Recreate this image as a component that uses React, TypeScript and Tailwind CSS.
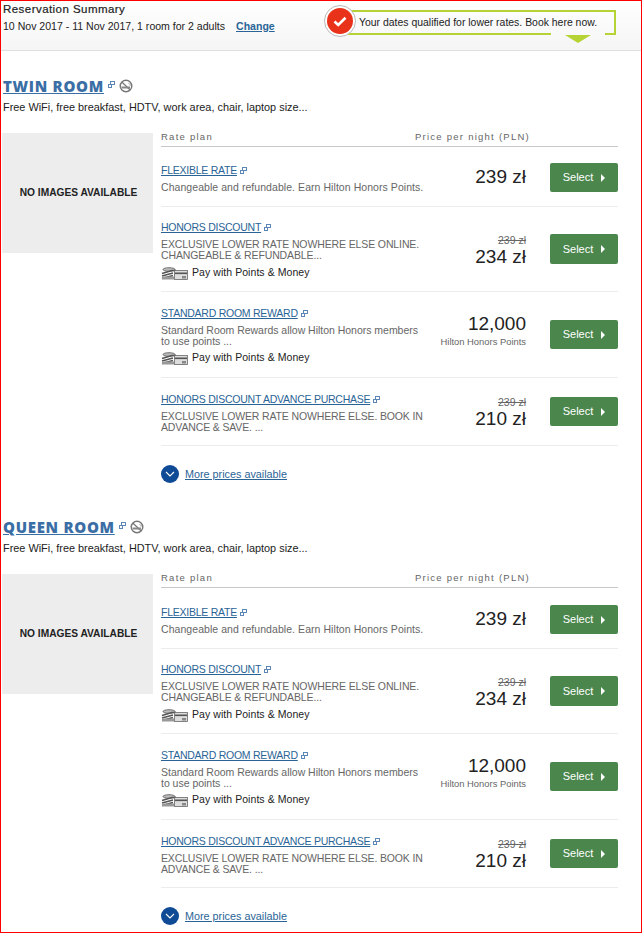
const FONT = "font-['Liberation_Sans',Arial,sans-serif]";

type Rate = {
  name: string;
  desc: string[];
  pay?: boolean;
  was?: string;
  price: string;
  unit?: string;
  height: string;
  titleTop: string;
  priceTop: string;
  btn: string;
  track: string;
  payGap?: string;
};

const RATES: Rate[] = [
  { name: "FLEXIBLE RATE", desc: ["Changeable and refundable. Earn Hilton Honors Points."], price: "239 zł", height: "h-[61px]", titleTop: "pt-[17px]", priceTop: "pt-[19px]", btn: "mt-[17px] h-[29px]", track: "tracking-[0.06px]" },
  { name: "HONORS DISCOUNT", desc: ["EXCLUSIVE LOWER RATE NOWHERE ELSE ONLINE.", "CHANGEABLE & REFUNDABLE..."], pay: true, was: "239 zł", price: "234 zł", height: "h-[85px]", titleTop: "pt-[13px]", priceTop: "pt-[28px]", btn: "mt-[27px] h-[30px]", track: "tracking-[-0.12px]", payGap: "mt-[5px]" },
  { name: "STANDARD ROOM REWARD", desc: ["Standard Room Rewards allow Hilton Honors members", "to use points ..."], pay: true, price: "12,000", unit: "Hilton Honors Points", height: "h-[86px]", titleTop: "pt-[14px]", priceTop: "pt-[20px]", btn: "mt-[28px] h-[29px]", track: "tracking-[-0.02px]", payGap: "mt-[4px]" },
  { name: "HONORS DISCOUNT ADVANCE PURCHASE", desc: ["EXCLUSIVE LOWER RATE NOWHERE ELSE. BOOK IN", "ADVANCE & SAVE. ..."], was: "239 zł", price: "210 zł", height: "h-[68px]", titleTop: "pt-[14px]", priceTop: "pt-[19px]", btn: "mt-[19px] h-[29px]", track: "tracking-[-0.14px]" },
];

function PopupIcon() {
  return (
    <svg width="7" height="7" viewBox="0 0 7 7" className="shrink-0" fill="none" stroke="#5b86b5" strokeWidth="1">
      <rect x="2.5" y="0.5" width="4" height="3" />
      <rect x="0.5" y="3.5" width="3" height="3" fill="#fff" />
    </svg>
  );
}

function NoSmoking() {
  return (
    <svg width="14" height="14" viewBox="0 0 14 14" className="shrink-0" fill="none">
      <circle cx="7" cy="7" r="5.8" stroke="#777" strokeWidth="1.4" />
      <path d="M2.8 3 11.2 11" stroke="#777" strokeWidth="1.2" />
      <rect x="2.5" y="7.5" width="8.5" height="2" fill="#888" />
      <path d="M9.5 4.5c1.5.2 1.8 1.2 1.6 2.3" stroke="#999" strokeWidth="0.9" />
    </svg>
  );
}

function PayIcon() {
  return (
    <svg width="27" height="13" viewBox="0 0 27 13" className="shrink-0" fill="none">
      <ellipse cx="8" cy="2.5" rx="6" ry="1.8" fill="#bbb" stroke="#555" strokeWidth="0.8" />
      <path d="M1 6.5 11 3.5h4M1 9 12 6M1 11.5 12 8.5" stroke="#555" strokeWidth="1.4" />
      <rect x="1" y="9.5" width="12" height="3" fill="#999" />
      <rect x="13.5" y="3.5" width="13" height="9" fill="#ddd" stroke="#666" strokeWidth="0.8" />
      <rect x="14" y="5.5" width="12" height="1.6" fill="#555" />
      <rect x="21" y="9" width="4" height="2.5" fill="#888" />
    </svg>
  );
}

function RateRow({ rate }: { rate: Rate }) {
  return (
    <div className={`flex border-b border-[#ececec] ${rate.height}`}>
      <div className={`w-[264px] shrink-0 ${rate.titleTop}`}>
        <div className="flex items-center gap-[3px] h-[14px]">
          <a className="text-[10.5px] leading-[14px] tracking-[-0.25px] text-[#2a6496] underline whitespace-nowrap">{rate.name}</a>
          <PopupIcon />
        </div>
        <div className={`mt-[5px] text-[10.5px] leading-[11px] text-[#666] whitespace-nowrap ${rate.track}`}>
          {rate.desc.map((d) => (
            <div key={d}>{d}</div>
          ))}
        </div>
        {rate.pay && (
          <div className={`flex items-center gap-[4px] h-[14px] ${rate.payGap}`}>
            <PayIcon />
            <span className="text-[10.5px] tracking-[0.06px] text-[#222] whitespace-nowrap">Pay with Points &amp; Money</span>
          </div>
        )}
      </div>
      <div className={`w-[101px] shrink-0 flex flex-col items-end text-right ${rate.priceTop}`}>
        {rate.was && <div className="text-[10.5px] leading-[11px] text-[#666] line-through">{rate.was}</div>}
        <div className={`text-[19px] leading-[24px] text-[#222] ${rate.was ? "-mt-[1px]" : ""}`}>{rate.price}</div>
        {rate.unit && <div className="text-[9.4px] leading-[12px] text-[#666] whitespace-nowrap">{rate.unit}</div>}
      </div>
      <div className="ml-auto">
        <button className={`w-[68px] bg-[#4b874d] rounded-[2px] flex items-center justify-center gap-[8px] text-[11px] text-white ${rate.btn}`}>
          Select
          <span className="w-0 h-0 border-y-[4px] border-y-transparent border-l-[4px] border-l-white" />
        </button>
      </div>
    </div>
  );
}

function Room({ title, rowsClass = "" }: { title: string; rowsClass?: string }) {
  return (
    <section className="h-[441px] pl-[2px] pr-[23px] pt-[26px]">
      <div className="flex items-center gap-[4px] h-[18px]">
        <a className="text-[15px] font-extrabold leading-[18px] tracking-[0.7px] text-[#3a6ea5] underline font-['Open_Sans',sans-serif]">{title}</a>
        <div className="mb-[3px]"><PopupIcon /></div>
        <NoSmoking />
      </div>
      <p className="text-[10.9px] leading-[14px] text-[#222] mt-[5px]">Free WiFi, free breakfast, HDTV, work area, chair, laptop size...</p>
      <div className="flex mt-[19px] -ml-[1px]">
        <div className="w-[151px] h-[120px] pl-[2px] bg-[#ededed] flex items-center justify-center text-[10.2px] font-bold text-[#222] shrink-0 whitespace-nowrap">
          NO IMAGES AVAILABLE
        </div>
        <div className="ml-[8px] flex-1">
          <div className="h-[13px] border-b border-[#c8c8c8] box-content -mt-[1px] pt-[1px] -mb-[1px] flex text-[9.5px] leading-[8px] tracking-[1.25px] text-[#666]">
            <span className="w-[254px]">Rate plan</span>
            <span className="whitespace-nowrap">Price per night (PLN)</span>
          </div>
          <div className={rowsClass}>
            {RATES.map((r) => (
              <RateRow key={r.name} rate={r} />
            ))}
          </div>
          <div className="flex items-center gap-[6px] mt-[19px]">
            <span className="w-[18px] h-[18px] rounded-full bg-[#0e4a96] flex items-center justify-center">
              <svg width="10" height="6" viewBox="0 0 10 6" fill="none" stroke="#fff" strokeWidth="1.1">
                <path d="M1 1l4 4 4-4" />
              </svg>
            </span>
            <a className="text-[10.8px] text-[#2a6496] underline">More prices available</a>
          </div>
        </div>
      </div>
    </section>
  );
}

export default function App() {
  return (
    <div className={`${FONT} w-[642px] h-[933px] border border-[#ff0000] overflow-hidden bg-white`}>
      <header className="relative h-[50px] bg-gradient-to-b from-[#ffffff] to-[#f5f5f5] border-b border-[#e0e0e0] pl-[2px]">
        <h1 className="pt-[1px] text-[11.5px] leading-[14px] font-medium text-[#222] [-webkit-text-stroke:0.2px_#222] tracking-[0.45px]">Reservation Summary</h1>
        <div className="flex items-center mt-[3px] text-[10.55px] leading-[14px] text-[#222]">
          <span>10 Nov 2017 - 11 Nov 2017, 1 room for 2 adults</span>
          <a className="ml-[11px] font-bold text-[#2a6496] underline">Change</a>
        </div>
        {/* offer callout */}
        <div className="absolute left-[343px] top-[9px] w-[272px] h-[25px] border-2 border-[#b5d334] pl-[13px] text-[10.45px] leading-[21px] text-[#222] whitespace-nowrap">
          Your dates qualified for lower rates. Book here now.
          <span className="absolute left-[205px] bottom-[-2px] w-[54px] h-[2px] bg-[#f8f8f8]" />
          <span className="absolute left-[219px] top-[23px] w-0 h-0 border-x-[13px] border-x-transparent border-t-[8px] border-t-[#b5d334]" />
        </div>
        <div className="absolute left-[323px] top-[4px] w-[32px] h-[32px] rounded-full bg-white border border-[#bbb] flex items-center justify-center">
          <span className="w-[26px] h-[26px] rounded-full bg-[#e8321a] flex items-center justify-center">
            <svg width="14" height="11" viewBox="0 0 14 11" fill="none" stroke="#fff" strokeWidth="2.6">
              <path d="M1.5 5.5 5.2 9 12.5 1.8" />
            </svg>
          </span>
        </div>
      </header>
      <Room title="TWIN ROOM" />
      <Room title="QUEEN ROOM" rowsClass="pt-[1px]" />
    </div>
  );
}
